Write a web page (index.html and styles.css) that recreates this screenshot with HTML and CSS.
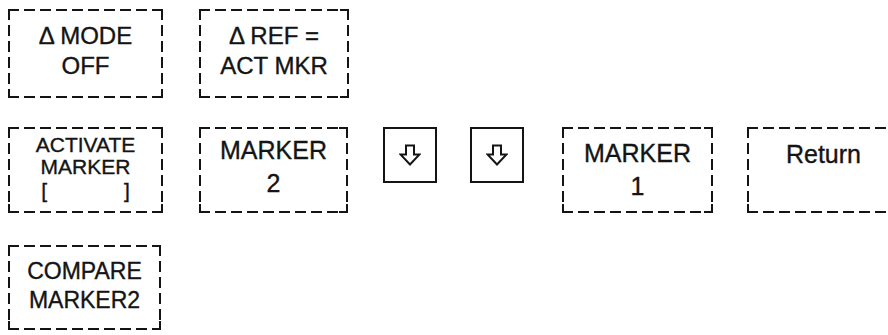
FILE: index.html
```html
<!DOCTYPE html>
<html lang="en">
  <head>
    <meta charset="UTF-8" />
    <meta name="viewport" content="width=device-width, initial-scale=1.0" />
    <title>Marker Softkeys</title>
    <link rel="stylesheet" href="styles.css">
  </head>
  <body>
    <div class="panel">

      <div class="row row-top">
        <div class="key key-mode">
          <span>&#916; MODE</span>
          <span>OFF</span>
        </div>
        <div class="key key-ref">
          <span>&#916; REF =</span>
          <span>ACT MKR</span>
        </div>
      </div>

      <div class="row row-mid">
        <div class="key key-activate">
          <span>ACTIVATE</span>
          <span>MARKER</span>
          <span class="bracket">[<i class="blank"></i>]</span>
        </div>
        <div class="key key-marker key-m2">
          <span>MARKER</span>
          <span>2</span>
        </div>
        <div class="step step-one">
          <svg width="22" height="22" viewBox="0 0 22 22">
            <path d="M7 1.5 H15 V10.5 H20.5 L11 20.5 L1.5 10.5 H7 Z" />
          </svg>
        </div>
        <div class="step step-two">
          <svg width="22" height="22" viewBox="0 0 22 22">
            <path d="M7 1.5 H15 V10.5 H20.5 L11 20.5 L1.5 10.5 H7 Z" />
          </svg>
        </div>
        <div class="key key-marker key-m1">
          <span>MARKER</span>
          <span>1</span>
        </div>
        <div class="key key-return">
          <span>Return</span>
        </div>
      </div>

      <div class="row row-bottom">
        <div class="key key-compare">
          <span>COMPARE</span>
          <span>MARKER2</span>
        </div>
      </div>

    </div>
  </body>
</html>
```

FILE: styles.css
```css
:root {
  --ink: #141414;
}

body,html {
  margin: 0;
  background: #ffffff;
  font-family: "Liberation Sans", Arial, Helvetica, sans-serif;
  color: var(--ink);
}

body {
  width: 888px;
  height: 335px;
  overflow: hidden;
}

.panel {
  padding: 9px 0 0 8px;
  display: flex;
  flex-direction: column;
  -webkit-text-stroke: 0.35px var(--ink);
}

.row {
  display: flex;
  align-items: flex-start;
}

.row-mid {
  margin-top: 29px;
}

.row-bottom {
  margin-top: 32px;
}

/* dashed softkey frame, drawn with gradients so the dashes are long like the print */
.key {
  flex-shrink: 0;
  box-sizing: border-box;
  display: flex;
  flex-direction: column;
  align-items: center;
  background:
    linear-gradient(var(--ink), var(--ink)) right top / 9px 2px no-repeat,
    linear-gradient(var(--ink), var(--ink)) right top / 2px 9px no-repeat,
    linear-gradient(var(--ink), var(--ink)) left bottom / 9px 2px no-repeat,
    linear-gradient(var(--ink), var(--ink)) left bottom / 2px 9px no-repeat,
    linear-gradient(var(--ink), var(--ink)) right bottom / 9px 2px no-repeat,
    linear-gradient(var(--ink), var(--ink)) right bottom / 2px 9px no-repeat,
    repeating-linear-gradient(90deg, var(--ink) 0 11px, transparent 11px 16px) left top / 100% 2px no-repeat,
    repeating-linear-gradient(90deg, var(--ink) 0 11px, transparent 11px 16px) left bottom / 100% 2px no-repeat,
    repeating-linear-gradient(180deg, var(--ink) 0 11px, transparent 11px 16px) left top / 2px 100% no-repeat,
    repeating-linear-gradient(180deg, var(--ink) 0 11px, transparent 11px 16px) right top / 2px 100% no-repeat;
}

.key-mode,
.key-ref {
  height: 89px;
  padding-top: 12px;
  font-size: 24px;
  line-height: 30px;
}

.key-mode {
  width: 155px;
}

.key-ref {
  width: 150px;
  margin-left: 36px;
}

.key-activate {
  width: 155px;
  height: 86px;
  padding-top: 7px;
  font-size: 21px;
  line-height: 22px;
}

.bracket {
  display: flex;
  align-items: center;
  padding-top: 2px;
}

.blank {
  display: inline-block;
  width: 77px;
}

.key-marker {
  height: 86px;
  font-size: 25px;
  line-height: 33px;
}

.key-m2 {
  width: 149px;
  margin-left: 36px;
  padding-top: 7px;
}

.key-m1 {
  width: 151px;
  margin-left: 38px;
  padding-top: 10px;
}

/* cut off by the page edge in the print, so no right side is drawn */
.key-return {
  width: 153px;
  height: 86px;
  margin-left: 34px;
  padding-top: 11px;
  font-size: 25px;
  line-height: 33px;
  background:
    linear-gradient(var(--ink), var(--ink)) left bottom / 9px 2px no-repeat,
    linear-gradient(var(--ink), var(--ink)) left bottom / 2px 9px no-repeat,
    repeating-linear-gradient(90deg, var(--ink) 0 11px, transparent 11px 16px) left top / 100% 2px no-repeat,
    repeating-linear-gradient(90deg, var(--ink) 0 11px, transparent 11px 16px) left bottom / 100% 2px no-repeat,
    repeating-linear-gradient(180deg, var(--ink) 0 11px, transparent 11px 16px) left top / 2px 100% no-repeat;
}

.key-compare {
  width: 153px;
  height: 85px;
  padding-top: 12px;
  font-size: 23px;
  line-height: 29px;
}

/* solid step keys with hollow arrow */
.step {
  flex-shrink: 0;
  box-sizing: border-box;
  width: 54px;
  height: 56px;
  border: 2px solid var(--ink);
  display: flex;
  align-items: center;
  justify-content: center;
}

.step-one {
  margin-left: 35px;
}

.step-two {
  margin-left: 33px;
}

.step svg path {
  fill: none;
  stroke: var(--ink);
  stroke-width: 2;
  stroke-linejoin: miter;
}
```
